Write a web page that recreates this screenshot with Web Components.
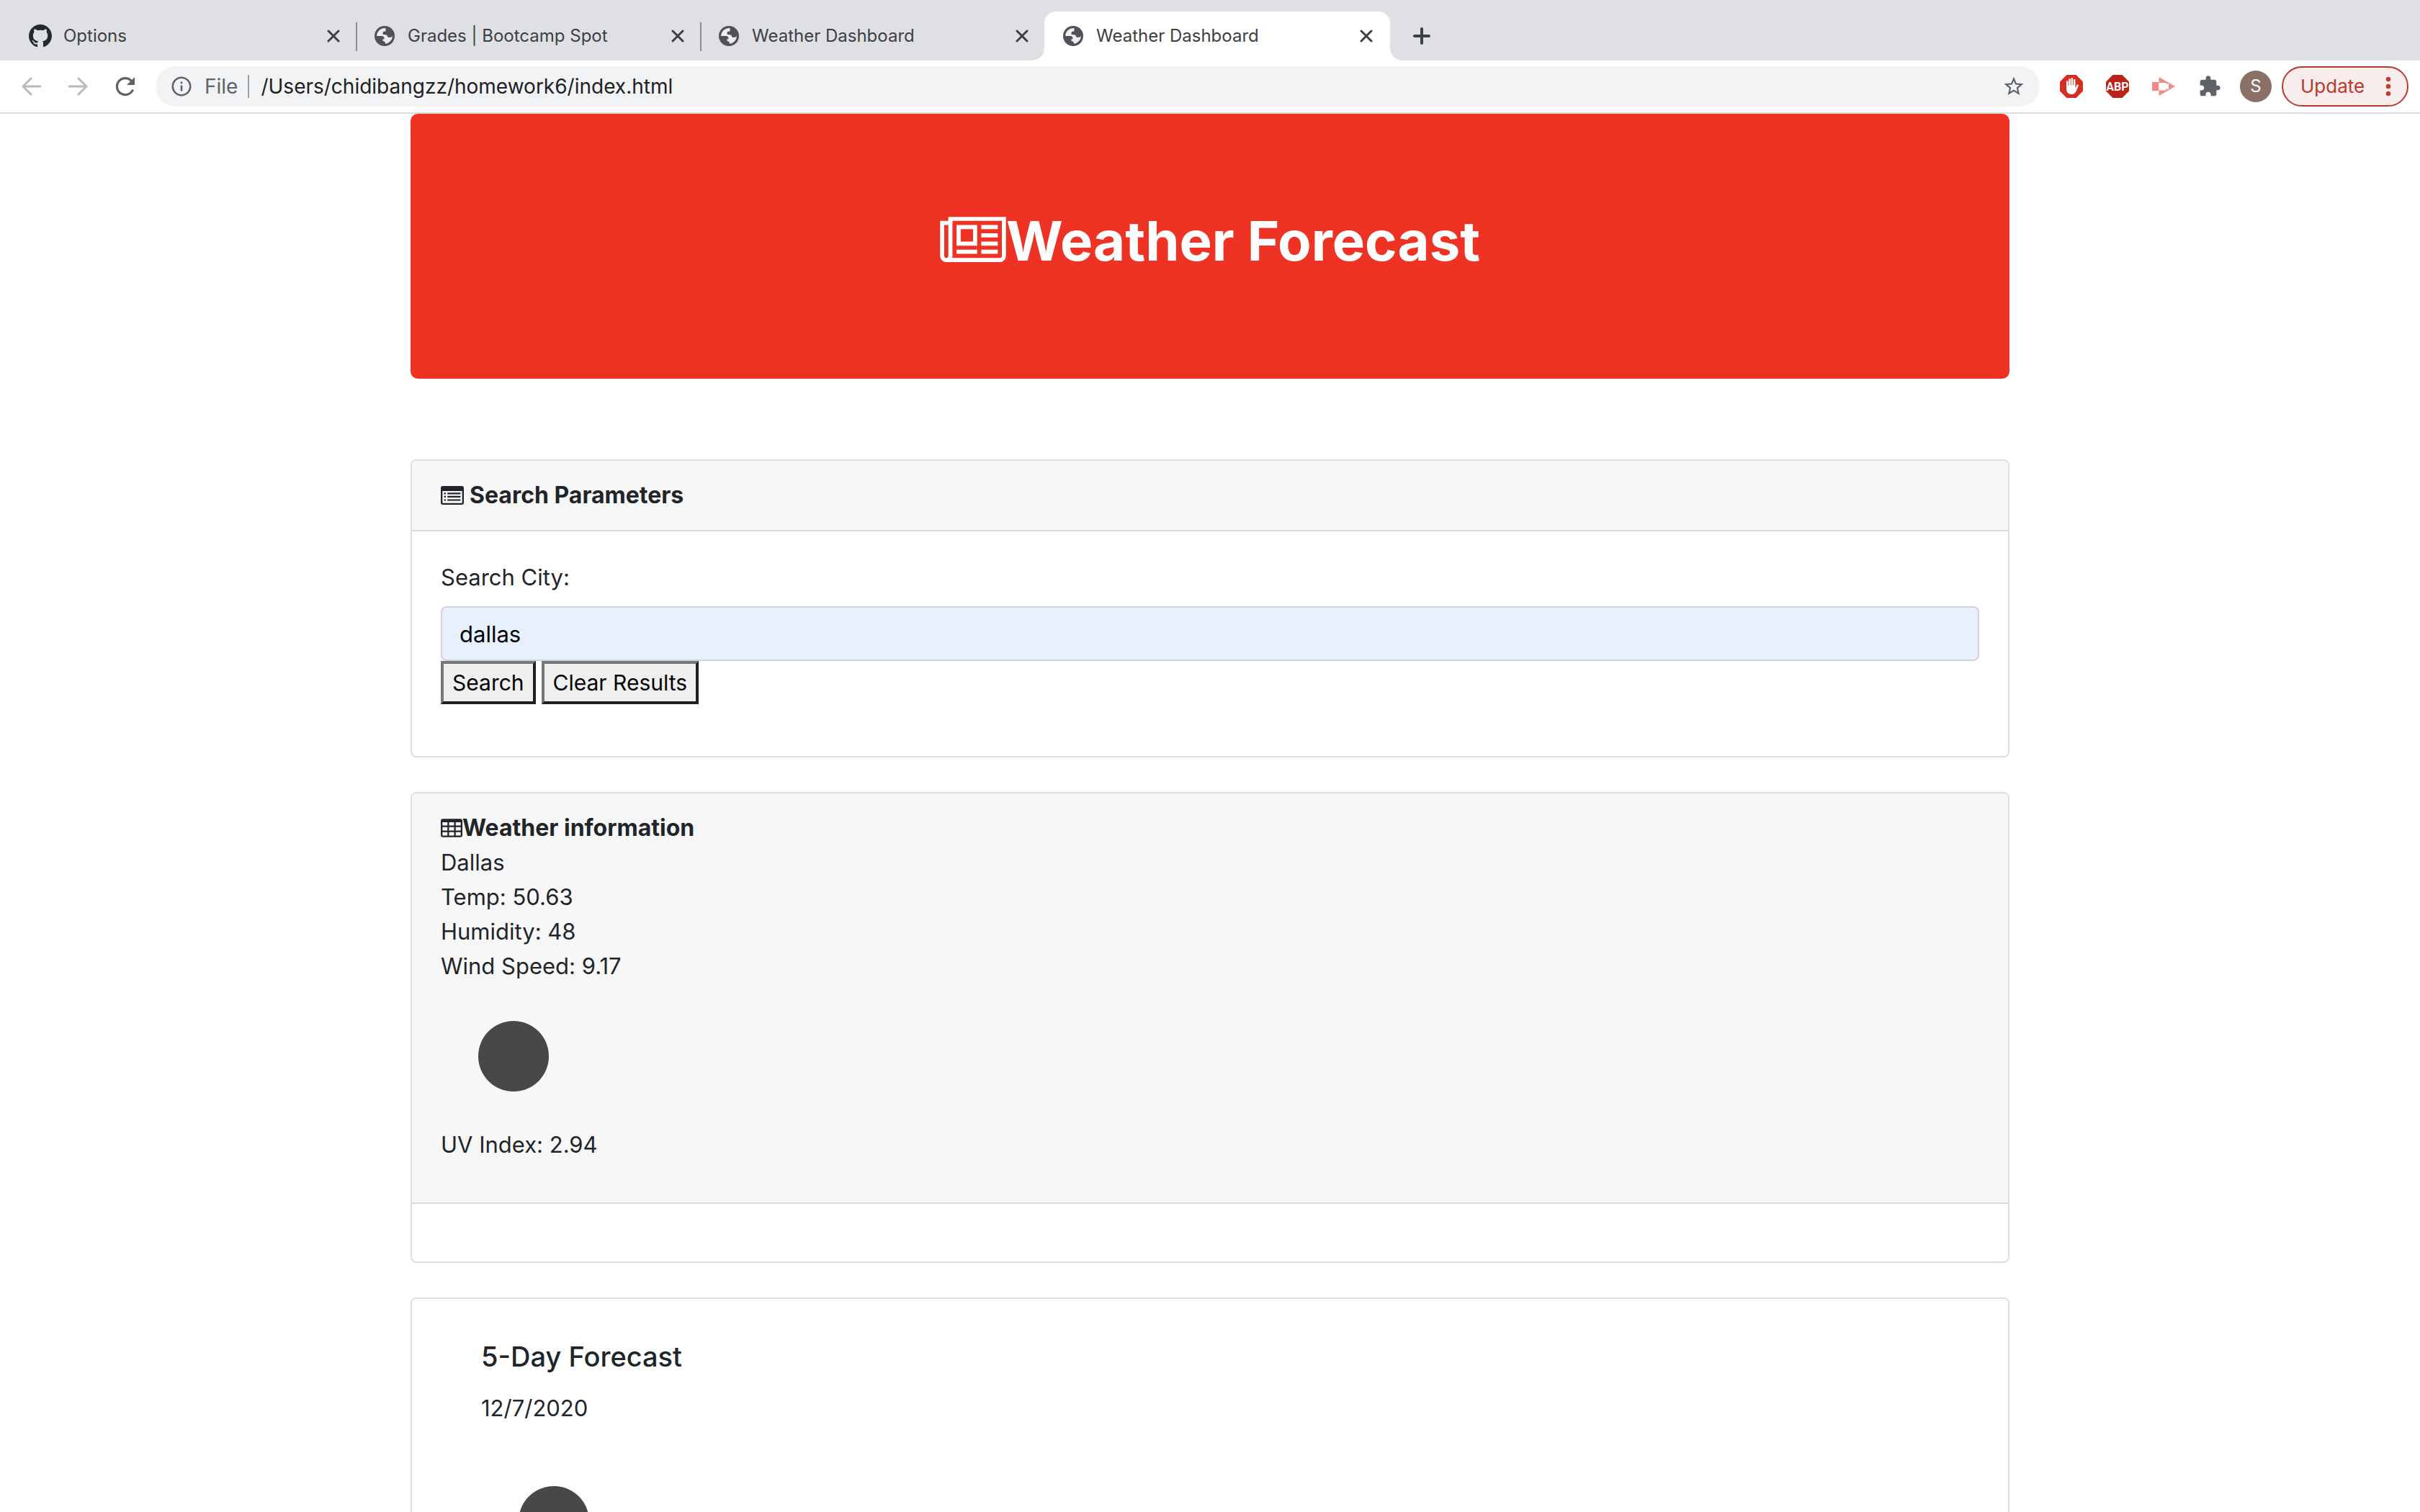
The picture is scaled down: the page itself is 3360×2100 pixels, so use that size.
<!DOCTYPE html>
<html lang="en">
<head>
<meta charset="utf-8">
<title>Weather Dashboard</title>
<style>
  body { margin: 0; background: #fff; color: #212529; font-family: Inter, "Liberation Sans", sans-serif; font-size: 31px; line-height: 48px; overflow: hidden; }
</style>
</head>
<body>
<weather-browser></weather-browser>

<script>
const define = (name, html, setup) => customElements.define(name, class extends HTMLElement {
  connectedCallback() {
    if (this.shadowRoot) return;
    const t = document.createElement('template');
    t.innerHTML = html;
    this.attachShadow({ mode: 'open' }).append(t.content.cloneNode(true));
    if (setup) setup(this, this.shadowRoot);
  }
});

const GLOBE = `<svg width="28" height="28" viewBox="0 0 28 28"><circle cx="14" cy="14" r="14" fill="#505257"/><path d="M15.5 3.2 A11 11 0 0 0 3.2 14 H10.5 Q13.6 14.3 13.6 18.2 H11.5 V21 Q15 21 15 24.8 A11 11 0 0 0 24.9 13.5 Q24 16 20.500 16 Q17.600 16 17.500 12.800 L11.500 11.800 V9 Q12 7.600 15.500 7.600 Z" fill="#eceef0"/></svg>`;
const GITHUB = `<svg width="32" height="32" viewBox="0 0 16 16" fill="#24292e"><path d="M8 0C3.58 0 0 3.58 0 8c0 3.54 2.29 6.53 5.47 7.59.4.07.55-.17.55-.38 0-.19-.01-.82-.01-1.49-2.01.37-2.53-.49-2.69-.94-.09-.23-.48-.94-.82-1.13-.28-.15-.68-.52-.01-.53.63-.01 1.08.58 1.23.82.72 1.21 1.87.87 2.33.66.07-.52.28-.87.51-1.07-1.78-.2-3.64-.89-3.64-3.95 0-.87.31-1.59.82-2.15-.08-.2-.36-1.02.08-2.12 0 0 .67-.21 2.2.82.64-.18 1.32-.27 2-.27s1.36.09 2 .27c1.53-1.04 2.2-.82 2.2-.82.44 1.1.16 1.92.08 2.12.51.56.82 1.27.82 2.15 0 3.07-1.87 3.75-3.65 3.95.29.25.54.73.54 1.48 0 1.07-.01 1.93-.01 2.2 0 .21.15.46.55.38A8.01 8.01 0 0 0 16 8c0-4.42-3.58-8-8-8z"/></svg>`;

define('browser-tab', `
<style>
  :host { display: flex; align-items: center; width: 478px; box-sizing: border-box; height: 68px; padding: 0 16px 0 24px; color: #3c4043; font-size: 24px; line-height: 32px; position: relative; }
  .icon { display: flex; justify-content: center; width: 32px; margin-right: 16px; }
  .title { flex: 1; white-space: nowrap; }
  button { all: unset; display: flex; padding: 6px; }
  :host([divided])::after { content: ""; position: absolute; right: -2px; top: 15px; width: 2px; height: 40px; background: #8b8e92; }
  :host([active]) { width: 480px; padding-right: 18px; background: #fff; border-radius: 16px 16px 0 0; }
  :host([active])::before, :host([active])::after { content: ""; position: absolute; bottom: 0; width: 16px; height: 16px; }
  :host([active])::before { right: 100%; background: radial-gradient(circle at 0 0, transparent 15px, #fff 16px); }
  :host([active])::after { left: 100%; background: radial-gradient(circle at 100% 0, transparent 15px, #fff 16px); }
</style>
<span class="icon"></span><span class="title"><slot></slot></span>
<button aria-label="Close tab"><svg width="18" height="18" viewBox="0 0 18 18" stroke="#3c4043" stroke-width="3" stroke-linecap="round"><path d="M2 2 16 16M16 2 2 16"/></svg></button>`,
(host, root) => { root.querySelector('.icon').innerHTML = host.getAttribute('icon') === 'github' ? GITHUB : GLOBE; });

define('browser-tabs', `
<style>
  :host { display: flex; align-items: flex-end; height: 84px; background: #dee0e4; padding-left: 16px; box-sizing: border-box; }
  browser-tab { flex: none; }
  button { all: unset; display: flex; padding: 22px 32px; }
</style>
<browser-tab icon="github" divided>Options</browser-tab>
<browser-tab divided>Grades | Bootcamp Spot</browser-tab>
<browser-tab>Weather Dashboard</browser-tab>
<browser-tab active>Weather Dashboard</browser-tab>
<button aria-label="New tab"><svg width="24" height="24" viewBox="0 0 24 24" stroke="#3c4043" stroke-width="4" stroke-linecap="round"><path d="M12 2V22M2 12H22"/></svg></button>`);

define('browser-toolbar', `
<style>
  :host { display: flex; align-items: center; height: 74px; box-sizing: border-box; border-bottom: 2px solid #dadce0; background: #fff; padding: 0 16px 0 28px; }
  button { all: unset; display: flex; flex: none; }
  .navs { display: flex; gap: 32px; margin-right: 28px; }
  .omni { flex: 1; display: flex; align-items: center; height: 56px; box-sizing: border-box; border-radius: 28px; background: #f1f3f4; padding: 0 20px; }
  .scheme { color: #5f6368; font-size: 28px; margin-left: 16px; }
  .bar { width: 2px; height: 32px; background: #9aa0a6; margin: 0 16px 0 14px; }
  input { all: unset; flex: 1; color: #202124; font: 28px/40px Inter, "Liberation Sans", sans-serif; }
  .ext { display: flex; align-items: center; gap: 32px; margin-left: 28px; }
  .avatar { width: 44px; height: 44px; border-radius: 50%; background: #8a7066; color: #fff; font-size: 24px; line-height: 44px; justify-content: center; margin: 0 14px 0 26px; }
  .update { height: 56px; width: 176px; box-sizing: border-box; border: 2px solid #b83a2b; border-radius: 28px; background: #f9ecec; color: #b93a2c; font-size: 26px; align-items: center; justify-content: space-between; padding: 0 22px 0 24px; }
</style>
<div class="navs">
<button aria-label="Back"><svg width="32" height="32" viewBox="0 0 32 32" fill="none" stroke="#b9bbbe" stroke-width="3"><path d="M29 16H5M16 4 4 16 16 28"/></svg></button>
<button aria-label="Forward"><svg width="32" height="32" viewBox="0 0 32 32" fill="none" stroke="#b9bbbe" stroke-width="3"><path d="M3 16H27M16 4 28 16 16 28"/></svg></button>
<button aria-label="Reload"><svg width="32" height="32" viewBox="0 0 32 32"><path d="M28.500 20.500A11.500 11.500 0 1 1 26.500 8.500" fill="none" stroke="#5f6368" stroke-width="3.200"/><path d="M31 3V14H20Z" fill="#5f6368"/></svg></button>
</div>
<div class="omni">
  <svg width="32" height="32" viewBox="0 0 32 32"><circle cx="16" cy="16" r="12.200" fill="none" stroke="#5f6368" stroke-width="2.600"/><path d="M14.700 14.500h2.600v8h-2.600zM14.700 9.500h2.600v2.800h-2.600z" fill="#5f6368"/></svg>
  <span class="scheme">File</span><span class="bar"></span>
  <input aria-label="Address" value="/Users/chidibangzz/homework6/index.html">
  <button aria-label="Bookmark"><svg width="32" height="32" viewBox="0 0 24 24" fill="#5f6368"><path d="M22 9.240l-7.190-.62L12 2 9.190 8.630 2 9.240l5.460 4.730L5.820 21 12 17.270 18.180 21l-1.630-7.030L22 9.240zM12 15.400l-3.760 2.270 1-4.280-3.320-2.880 4.380-.38L12 6.100l1.710 4.040 4.380.38-3.320 2.880 1 4.280L12 15.400z"/></svg></button>
</div>
<div class="ext">
  <button aria-label="Ad blocker"><svg width="32" height="32" viewBox="0 0 32 32"><path d="M9.500 0h13L32 9.500v13L22.500 32h-13L0 22.500v-13Z" fill="#d52d20"/><path d="M9 19V9.500a1.200 1.200 0 0 1 2.500 0V15h.8V6.500a1.200 1.200 0 0 1 2.500 0V14.500h.8V5.200a1.200 1.200 0 0 1 2.500 0V14.500h.8V7.200a1.200 1.200 0 0 1 2.500 0V18l2-4a1.400 1.400 0 0 1 2.500 1.200L23 22q-2 5-6.500 5Q9 27 9 19Z" fill="#fff"/></svg></button>
  <button aria-label="Adblock Plus"><svg width="32" height="32" viewBox="0 0 32 32"><path d="M9.500 0h13L32 9.500v13L22.500 32h-13L0 22.500v-13Z" fill="#bb2319"/><text x="16" y="22" text-anchor="middle" font-family="Roboto, sans-serif" font-size="16" font-weight="700" fill="#fff">ABP</text></svg></button>
  <button aria-label="Screen recorder"><svg width="32" height="32" viewBox="0 0 32 32"><path d="M0 10H9V22H0Z" fill="#f08a88"/><path d="M9.500 3 32 16 9.500 29Z" fill="#f28b88"/><path d="M9.500 11H19.500V13.500L23 11.500V20.500L19.500 18.500V21.500H9.500Z" fill="#fff"/></svg></button>
  <button aria-label="Extensions"><svg width="32" height="32" viewBox="0 0 24 24" fill="#5f6368"><path d="M20.500 11H19V7c0-1.100-.9-2-2-2h-4V3.500C13 2.120 11.880 1 10.500 1S8 2.120 8 3.500V5H4c-1.100 0-1.990.9-1.990 2v3.800H3.500c1.490 0 2.700 1.210 2.700 2.700s-1.210 2.700-2.700 2.700H2V20c0 1.100.9 2 2 2h3.800v-1.500c0-1.490 1.210-2.700 2.700-2.700s2.700 1.210 2.700 2.700V22H17c1.100 0 2-.9 2-2v-4h1.500c1.380 0 2.500-1.120 2.500-2.500S21.880 11 20.500 11z"/></svg></button>
</div>
<button class="avatar" aria-label="Profile">S</button>
<button class="update">Update <svg width="8" height="28" viewBox="0 0 8 28" fill="#c5392a"><circle cx="4" cy="4" r="3.200"/><circle cx="4" cy="14" r="3.200"/><circle cx="4" cy="24" r="3.200"/></svg></button>`);

define('page-banner', `
<style>
  :host { display: flex; justify-content: center; background: #ee3224; color: #fff; border-radius: 10px; padding: 128px 64px 144px; margin-bottom: 112px; }
  h1 { display: flex; align-items: center; margin: 0; font-size: 76px; line-height: 96px; font-weight: 700; }
  svg { display: block; }
</style>
<h1><svg width="92" height="80" viewBox="0 96 2048 1792" fill="#fff"><path fill-rule="evenodd" d="M512 512h640v640H512zM640 640v384h384V640zM512 1280h640v128H512zM1280 1280h512v128h-512zM1280 1024h512v128h-512zM1280 768h512v128h-512zM1280 512h512v128h-512zM256 1472V512H128v960q0 26 19 45t45 19 45-19 19-45zM1920 1472V384H384v1088q0 33-11 64h1483q26 0 45-19t19-45zM2048 256v1216q0 80-56 136t-136 56H192q-80 0-136-56T0 1472V384h256V256z"/></svg><slot></slot></h1>`);

define('info-card', `
<style>
  :host { display: block; border: 2px solid #dfdfdf; border-radius: 8px; background: #fff; margin-bottom: 48px; overflow: hidden; }
  .head { background: #f7f7f7; border-bottom: 2px solid #d9d9d9; padding: 24px 40px; }
  .body { padding: 40px; }
  :host([plain]) .head { display: none; }
  :host([plain]) .body { padding: 56px 96px; }
</style>
<div class="head"><slot name="head"></slot></div>
<div class="body"><slot></slot></div>`);

define('card-title', `
<style>
  :host { display: block; }
  h2 { display: flex; align-items: center; margin: 0; font-size: 32px; line-height: 48px; font-weight: 700; }
  :host([spaced]) h2 { gap: 8px; }
</style>
<h2><span></span><slot></slot></h2>`,
(host, root) => {
  const icons = {
    list: `<svg style="display:block" width="32" height="26" viewBox="0 0 32 26" fill="#212529"><path fill-rule="evenodd" d="M3 0H29Q32 0 32 3V23Q32 26 29 26H3Q0 26 0 23V3Q0 0 3 0ZM2.300 7V23Q2.300 23.700 3 23.700H29Q29.700 23.700 29.700 23V7Z"/><path d="M4.600 9.200H7V11.400H4.600ZM4.600 13.800H7V16H4.600ZM4.600 18.400H7V20.600H4.600ZM9.200 9.200H27.400V11.400H9.200ZM9.200 13.800H27.400V16H9.200ZM9.200 18.400H27.400V20.600H9.200Z"/></svg>`,
    table: `<svg style="display:block" width="30" height="26" viewBox="64 128 1664 1408" fill="#212529"><path fill-rule="evenodd" d="M224 128H1568Q1728 128 1728 288V1376Q1728 1536 1568 1536H224Q64 1536 64 1376V288Q64 128 224 128ZM192 384V640H576V384ZM704 384V640H1088V384ZM1216 384V640H1600V384ZM192 768V1024H576V768ZM704 768V1024H1088V768ZM1216 768V1024H1600V768ZM192 1152V1408H576V1152ZM704 1152V1408H1088V1152ZM1216 1152V1408H1600V1152Z"/></svg>`
  };
  root.querySelector('span').innerHTML = icons[host.getAttribute('icon')];
});

define('weather-icon', `
<style>:host { display: block; width: 200px; height: 200px; } svg { display: block; }</style>
<svg width="200" height="200" viewBox="0 0 200 200" role="img" aria-label="Clear sky"><circle cx="101" cy="101" r="49" fill="#48484a"/></svg>`);

define('search-form', `
<style>
  form { margin: 0 0 32px; }
  label { display: block; margin-bottom: 16px; }
  input { display: block; width: 100%; height: 76px; box-sizing: border-box; margin: 0; padding: 12px 24px; border: 2px solid #ced4da; border-radius: 8px; background: #e8effd; color: #000; font: inherit; outline: 0; }
  .row { display: flex; gap: 8px; }
  button { font: inherit; font-size: 30px; color: #000; background: #efefef; border: 4px solid; border-color: #767676 #212121 #212121 #767676; border-radius: 0; margin: 0; padding: 2px 12px; height: 60px; line-height: 48px; }
</style>
<form onsubmit="return false">
  <label for="city">Search City:</label>
  <input id="city" type="text" value="dallas">
  <div class="row"><button type="submit">Search</button><button type="reset">Clear Results</button></div>
</form>`);

define('current-weather', `
<style>p { margin: 0; } .uv { margin-bottom: 32px; }</style>
<card-title icon="table">Weather information</card-title>
<p>Dallas</p>
<p>Temp: 50.63</p>
<p>Humidity: 48</p>
<p>Wind Speed: 9.17</p>
<weather-icon></weather-icon>
<p class="uv">UV Index: 2.94</p>`);

define('five-day-forecast', `
<style>
  h2 { margin: 0 0 24px; font-size: 38px; line-height: 48px; font-weight: 500; }
  p { margin: 0 0 32px; }
</style>
<h2>5-Day Forecast</h2>
<p>12/7/2020</p>
<weather-icon></weather-icon>`);

define('weather-page', `
<style>:host { display: block; max-width: 2220px; margin: 0 auto; }</style>
<page-banner>Weather Forecast</page-banner>
<info-card><card-title slot="head" icon="list" spaced>Search Parameters</card-title><search-form></search-form></info-card>
<info-card><current-weather slot="head"></current-weather></info-card>
<info-card plain><five-day-forecast></five-day-forecast></info-card>`);

define('weather-browser', `
<style>:host { display: block; height: 100vh; overflow: hidden; }</style>
<browser-tabs></browser-tabs>
<browser-toolbar></browser-toolbar>
<weather-page></weather-page>`);
</script>
</body>
</html>
